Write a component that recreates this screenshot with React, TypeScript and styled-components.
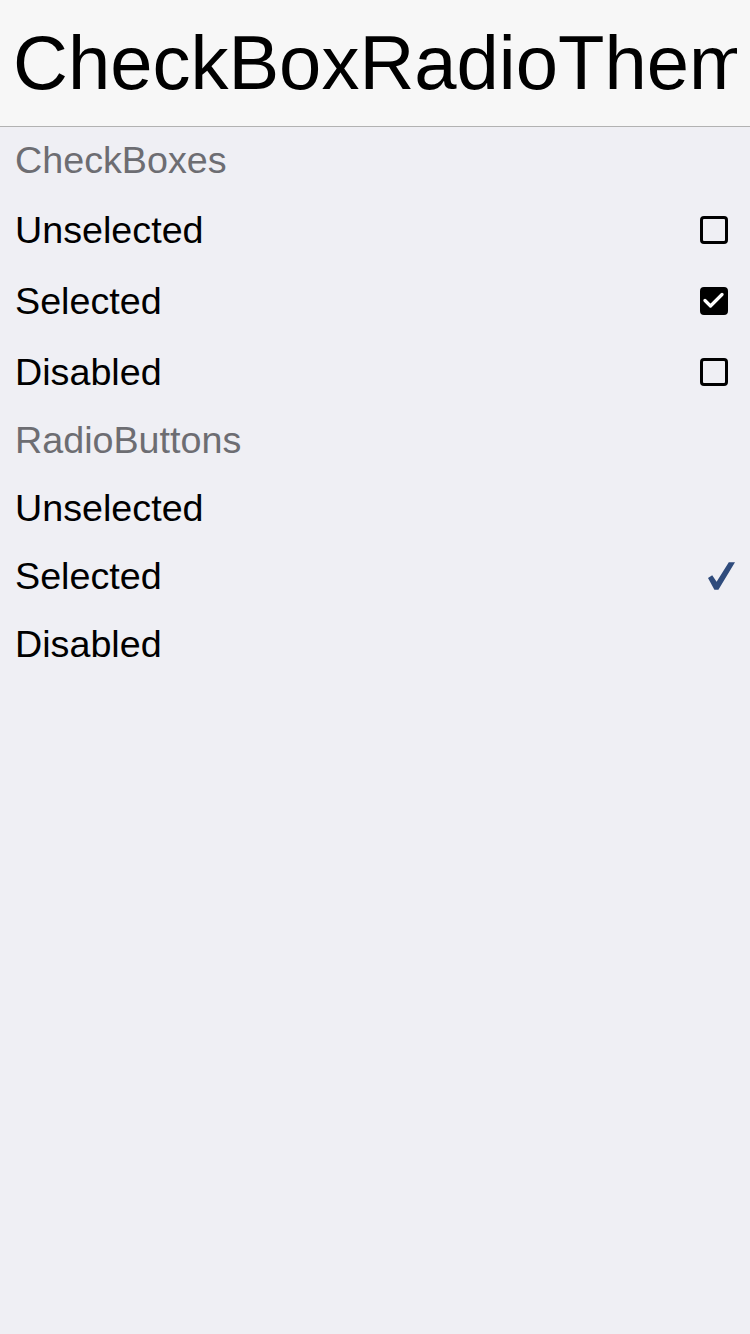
import React from "react";
import styled, { createGlobalStyle } from "styled-components";

const GlobalStyle = createGlobalStyle`
  html, body {
    margin: 0;
    padding: 0;
    background: #efeff4;
    font-family: "Liberation Sans", Arial, sans-serif;
  }
  #root {
    min-height: 1334px;
    background: #efeff4;
  }
`;

const Page = styled.div`
  display: flex;
  flex-direction: column;
  width: 750px;
  min-height: 1334px;
  background: #efeff4;
`;

const Header = styled.header`
  display: flex;
  align-items: center;
  height: 126px;
  padding: 0 13px 0 13px;
  background: #f7f7f7;
  border-bottom: 1px solid #b2b2b2;
  overflow: hidden;
`;

const Title = styled.h1`
  margin: 0;
  font-family: "Liberation Sans", Arial, sans-serif;
  font-weight: 400;
  font-size: 76px;
  line-height: 86px;
  color: #000;
  white-space: nowrap;
  overflow: hidden;
  flex: 1;
  min-width: 0;
`;

const SectionTitle = styled.div`
  padding: 12px 15px 13px;
  font-size: 37.7px;
  line-height: 42px;
  color: #6d6d72;
`;

const Row = styled.div<{ $h: number }>`
  display: flex;
  align-items: center;
  justify-content: space-between;
  height: ${(p) => p.$h}px;
  padding: 0 22px 0 15px;
  box-sizing: border-box;
`;

const RadioRow = styled(Row)`
  padding-right: 15px;
`;

const Label = styled.span`
  font-size: 37.7px;
  line-height: 42px;
  color: #000;
`;

const Box = styled.span<{ $checked?: boolean }>`
  display: flex;
  align-items: center;
  justify-content: center;
  width: 28px;
  height: 28px;
  box-sizing: border-box;
  border: 3px solid #000;
  border-radius: 4px;
  background: ${(p) => (p.$checked ? "#000" : "transparent")};
`;

const Check = () => (
  <svg width="22" height="22" viewBox="0 0 22 22">
    <path
      d="M2 10.5 L7.5 16 L19 4.5"
      fill="none"
      stroke="#fff"
      strokeWidth="3.2"
      strokeLinecap="round"
      strokeLinejoin="round"
    />
  </svg>
);

const RadioCheck = () => (
  <svg width="27" height="28" viewBox="0 0 27 28">
    <polygon
      points="0,16 4.2,13.2 8.6,19.8 20.8,0.2 27,0.2 10.4,27.8 6.4,27.8"
      fill="#2f4b7c"
    />
  </svg>
);

export default function App() {
  return (
    <Page>
      <GlobalStyle />
      <Header>
        <Title>CheckBoxRadioThemes</Title>
      </Header>
      <SectionTitle>CheckBoxes</SectionTitle>
      <Row $h={71}>
        <Label>Unselected</Label>
        <Box />
      </Row>
      <Row $h={71}>
        <Label>Selected</Label>
        <Box $checked>
          <Check />
        </Box>
      </Row>
      <Row $h={71}>
        <Label>Disabled</Label>
        <Box />
      </Row>
      <SectionTitle>RadioButtons</SectionTitle>
      <RadioRow $h={68}>
        <Label>Unselected</Label>
      </RadioRow>
      <RadioRow $h={68}>
        <Label>Selected</Label>
        <RadioCheck />
      </RadioRow>
      <RadioRow $h={68}>
        <Label>Disabled</Label>
      </RadioRow>
    </Page>
  );
}
